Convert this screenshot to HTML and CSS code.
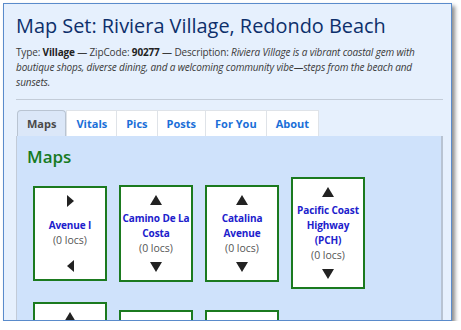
FILE: index.html
```html
<!DOCTYPE html>
<html lang="en">
<head>
  <meta charset="UTF-8">
  <meta name="viewport" content="width=device-width, initial-scale=1.0">
  <title>Map Set: Riviera Village, Redondo Beach</title>
  <link rel="stylesheet" href="styles.css">
</head>
<body>
  <div class="frame">
    <h1>Map Set: Riviera Village, Redondo Beach</h1>
    <p class="desc">Type: <b>Village</b> — ZipCode: <b>90277</b> — Description: <i>Riviera Village is a vibrant coastal gem with boutique shops, diverse dining, and a welcoming community vibe—steps from the beach and sunsets.</i></p>
    <hr>

    <div class="tabs">
      <div class="tab active">Maps</div>
      <div class="tab">Vitals</div>
      <div class="tab">Pics</div>
      <div class="tab">Posts</div>
      <div class="tab">For You</div>
      <div class="tab">About</div>
    </div>

    <div class="panel">
      <h2>Maps</h2>
      <div class="cards">
        <div class="card">
          <svg class="arrow side" viewBox="0 0 7 12"><polygon points="0,0 7,6 0,12"/></svg>
          <div class="info">
            <div class="name">Avenue I</div>
            <div class="locs">(0 locs)</div>
          </div>
          <svg class="arrow side" viewBox="0 0 7 12"><polygon points="7,0 0,6 7,12"/></svg>
        </div>
        <div class="card">
          <svg class="arrow" viewBox="0 0 12 10"><polygon points="6,0 12,10 0,10"/></svg>
          <div class="info">
            <div class="name">Camino De La Costa</div>
            <div class="locs">(0 locs)</div>
          </div>
          <svg class="arrow" viewBox="0 0 12 10"><polygon points="0,0 12,0 6,10"/></svg>
        </div>
        <div class="card">
          <svg class="arrow" viewBox="0 0 12 10"><polygon points="6,0 12,10 0,10"/></svg>
          <div class="info">
            <div class="name">Catalina Avenue</div>
            <div class="locs">(0 locs)</div>
          </div>
          <svg class="arrow" viewBox="0 0 12 10"><polygon points="0,0 12,0 6,10"/></svg>
        </div>
        <div class="card">
          <svg class="arrow" viewBox="0 0 12 10"><polygon points="6,0 12,10 0,10"/></svg>
          <div class="info">
            <div class="name">Pacific Coast Highway (PCH)</div>
            <div class="locs">(0 locs)</div>
          </div>
          <svg class="arrow" viewBox="0 0 12 10"><polygon points="0,0 12,0 6,10"/></svg>
        </div>

        <div class="card">
          <svg class="arrow" viewBox="0 0 12 10"><polygon points="6,0 12,10 0,10"/></svg>
          <div class="info">
            <div class="name">Palos Verdes Boulevard (PVB)</div>
            <div class="locs">(0 locs)</div>
          </div>
          <svg class="arrow" viewBox="0 0 12 10"><polygon points="0,0 12,0 6,10"/></svg>
        </div>
        <div class="card">
          <svg class="arrow" viewBox="0 0 12 10"><polygon points="6,0 12,10 0,10"/></svg>
          <div class="info">
            <div class="name">Esplanade Street</div>
            <div class="locs">(0 locs)</div>
          </div>
          <svg class="arrow" viewBox="0 0 12 10"><polygon points="0,0 12,0 6,10"/></svg>
        </div>
        <div class="card">
          <svg class="arrow" viewBox="0 0 12 10"><polygon points="6,0 12,10 0,10"/></svg>
          <div class="info">
            <div class="name">Prospect Avenue</div>
            <div class="locs">(0 locs)</div>
          </div>
          <svg class="arrow" viewBox="0 0 12 10"><polygon points="0,0 12,0 6,10"/></svg>
        </div>
      </div>
    </div>
  </div>
</body>
</html>
```

FILE: styles.css
```css
body {
  margin: 0;
  background-color: #fff;
  font-family: 'Open Sans', 'Noto Sans', sans-serif;
  color: #333;
}
.frame {
  box-sizing: border-box;
  width: 449px;
  height: 318px;
  margin: 3px 0 0 3px;
  padding: 0 8px 0 12px;
  border: 1px solid #5a8bcb;
  background-color: #e6f0fd;
  box-shadow: 3px 3px 4px rgba(0, 0, 0, 0.45);
  overflow: hidden;
}
h1 {
  margin: 8px 0 5px;
  font-size: 19.9px;
  line-height: 28px;
  font-weight: 500;
  color: #0d2f6b;
}
.desc {
  margin: 0 12px 0 0;
  font-size: 10px;
  letter-spacing: -0.15px;
  line-height: 15px;
  color: #3a3a3a;
}
.desc b {
  color: #222;
}
hr {
  margin: 9px 0 10px;
  border: none;
  border-top: 1px solid #c3ccd8;
}
.tabs {
  display: flex;
  padding-left: 1px;
}
.tab {
  height: 26px;
  box-sizing: border-box;
  padding: 0 9px;
  line-height: 25px;
  font-size: 11px;
  font-weight: 700;
  color: #1b6fd8;
  background-color: #fff;
  border: 1px solid #dfe3e8;
  border-bottom: none;
  border-right: none;
}
.tab:last-child {
  border-right: 1px solid #dfe3e8;
}
.tab.active {
  color: #4a4a4a;
  background-color: #dbe7f8;
  border: 1px solid #b9c4d2;
  border-bottom: none;
  border-radius: 4px 4px 0 0;
}
.panel {
  background-color: #cfe2fb;
  border-left: 1px solid #c2cbd8;
  border-right: 2px solid #b8c3d2;
  padding: 10px 10px 20px;
}
h2 {
  margin: 0 0 9px;
  font-size: 17px;
  line-height: 22px;
  font-weight: 600;
  color: #177a22;
}
.cards {
  display: flex;
  flex-wrap: wrap;
  align-items: center;
  gap: 13px 12px;
  padding-left: 6px;
}
.card {
  box-sizing: border-box;
  width: 74px;
  min-height: 95px;
  padding: 6px 1px;
  border: 2px solid #1b7a1f;
  background-color: #fff;
  display: flex;
  flex-direction: column;
  justify-content: space-between;
  align-items: center;
  gap: 4px;
  text-align: center;
}
.arrow {
  width: 12px;
  height: 14px;
  fill: #222;
  padding: 2px 0;
  box-sizing: border-box;
}
.arrow.side {
  width: 7px;
  padding: 1px 0;
}
.name {
  font-size: 10px;
  letter-spacing: -0.1px;
  line-height: 15px;
  font-weight: 700;
  color: #2020cc;
}
.locs {
  font-size: 10.5px;
  line-height: 15px;
  color: #555;
}
```
